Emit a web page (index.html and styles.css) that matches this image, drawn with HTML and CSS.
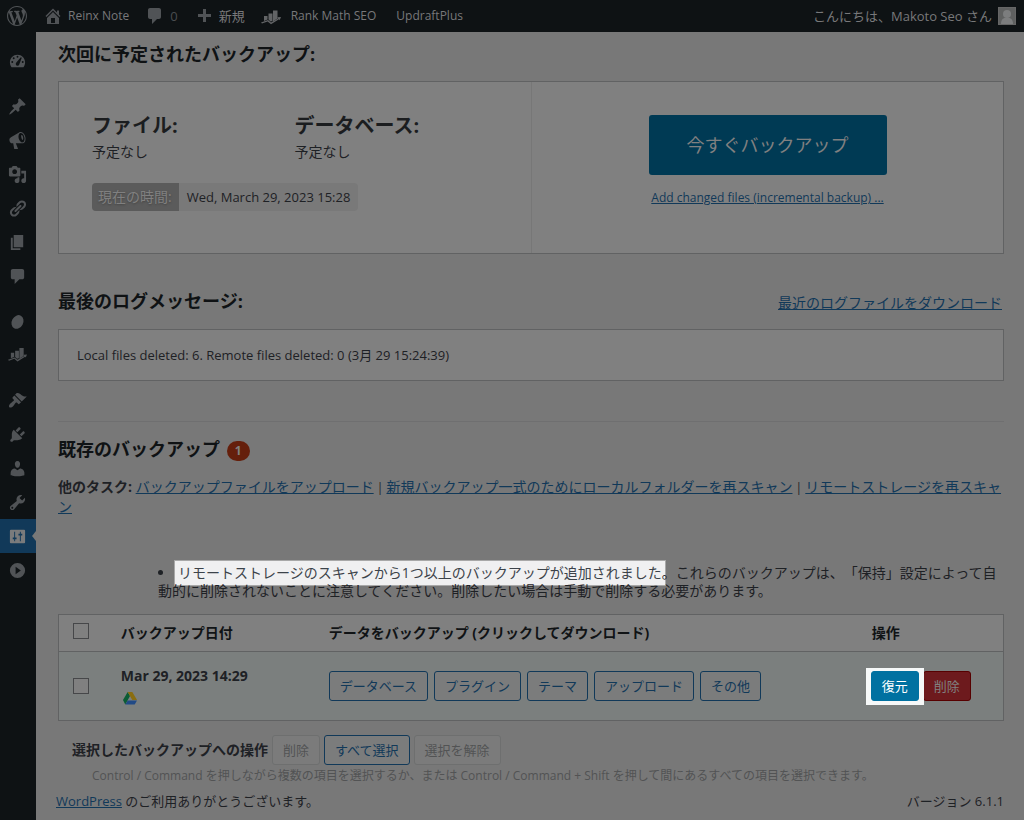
FILE: index.html
```html
<!DOCTYPE html>
<html lang="ja">
<head>
<meta charset="utf-8">
<title>UpdraftPlus</title>
<link rel="stylesheet" href="styles.css">
</head>
<body>
<header class="topbar">
  <a class="bar-item bar-logo" href="#" aria-label="WordPress"><svg class="icon" viewBox="0 0 20 20"><path d="M20 10c0-5.51-4.49-10-10-10C4.48 0 0 4.49 0 10c0 5.52 4.48 10 10 10 5.51 0 10-4.48 10-10zM7.78 15.37L4.37 6.22c.55-.02 1.17-.08 1.17-.08.5-.06.44-1.13-.06-1.11 0 0-1.45.11-2.37.11-.18 0-.37 0-.58-.01C4.12 2.69 6.87 1.11 10 1.11c2.33 0 4.45.87 6.05 2.34-.68-.11-1.65.39-1.65 1.58 0 .74.45 1.36.9 2.1.35.61.55 1.36.55 2.46 0 1.49-1.4 5-1.4 5l-3.03-8.37c.54-.02.82-.17.82-.17.5-.05.44-1.25-.06-1.22 0 0-1.44.12-2.38.12-.87 0-2.33-.12-2.33-.12-.5-.03-.56 1.2-.06 1.22l.92.08 1.26 3.41zM17.41 10c.24-.64.74-1.87.43-4.25.7 1.29 1.05 2.71 1.05 4.25 0 3.29-1.73 6.24-4.4 7.78.97-2.59 1.94-5.2 2.92-7.78zM6.1 18.09C3.12 16.65 1.11 13.53 1.11 10c0-1.3.23-2.48.72-3.59C3.25 10.3 4.67 14.2 6.1 18.09zm4.03-6.63l2.58 6.98c-.86.29-1.76.45-2.71.45-.79 0-1.57-.11-2.29-.33.81-2.38 1.62-4.74 2.42-7.1z"/></svg></a>
  <a class="bar-item bar-latin" href="#"><svg class="icon" viewBox="0 0 20 20"><path fill-rule="evenodd" d="M16 8.5l1.53 1.53-1.06 1.06L10 4.6l-6.47 6.49-1.06-1.06L10 2.5l4 4v-2h2v4zm-6-2.46l6 5.99V18H4v-5.97zM12 17v-5H8v5h4z"/></svg><span>Reinx Note</span></a>
  <a class="bar-item bar-count" href="#"><svg class="icon" viewBox="0 0 20 20"><path d="M5 2h9c1.1 0 2 .9 2 2v7c0 1.1-.9 2-2 2h-2l-5 5v-5H5c-1.1 0-2-.9-2-2V4c0-1.1.9-2 2-2z"/></svg><span>0</span></a>
  <a class="bar-item" href="#"><svg class="icon" viewBox="0 0 20 20"><path d="M17 8v3h-5v5H9v-5H4V8h5V3h3v5z"/></svg><span>新規</span></a>
  <a class="bar-item bar-latin bar-rank" href="#"><svg class="icon" viewBox="0 0 20 20"><path d="M3 10h3.500v3.500l-3.500 1.500zM7.500 7.500h4v7.500l-2 .5-2-2zM12 4.500h4.500v8l-4.500 3z"/><path d="M0 16.500l7-2.500 3 2.500 7-4-.7-1.200L20 11l-1.300 3.200-.7-1-8 5-3.400-2.700L1 17.500z"/></svg><span>Rank Math SEO</span></a>
  <a class="bar-item bar-latin" href="#"><span>UpdraftPlus</span></a>
  <a class="bar-item bar-user" href="#"><span>こんにちは、Makoto Seo さん</span><svg class="avatar" viewBox="0 0 18 18"><rect width="18" height="18" fill="#666"/><rect x="1" y="1" width="16" height="16" fill="#5f6060"/><circle cx="9" cy="7" r="4" fill="#7c7d7e"/><path fill="#7c7d7e" d="M3 17c0-4 2-6 4-6h4c2 0 4 2 4 6z"/></svg></a>
</header>
<div class="layout">
  <nav class="sidebar" aria-label="管理メニュー">
    <a class="side-item" href="#" aria-label="ダッシュボード"><svg class="icon" viewBox="0 0 20 20"><path fill-rule="evenodd" d="M3.760 16h12.480c1.100-1.370 1.760-3.110 1.760-5 0-4.420-3.580-8-8-8s-8 3.580-8 8c0 1.890.66 3.630 1.760 5zM10 4a1 1 0 1 1 0 2 1 1 0 0 1 0-2zM6 5.500a1 1 0 1 1 0 2 1 1 0 0 1 0-2zM4.500 9.500a1 1 0 1 1 0 2 1 1 0 0 1 0-2zM15.500 9.500a1 1 0 1 1 0 2 1 1 0 0 1 0-2zM13.500 5.500l1 .5-2.500 6.500c-.2 1-1 2-2 2a2 2 0 0 1-1-3.600z"/></svg></a>
    <a class="side-item group" href="#" aria-label="投稿"><svg class="icon" viewBox="0 0 20 20"><path d="M10.440 3.020l1.820-1.820 6.360 6.350-1.830 1.820c-1.050-.68-2.480-.57-3.410.36l-.75.75c-.92.93-1.040 2.350-.35 3.410l-1.830 1.820-2.410-2.410-2.800 2.790c-.42.42-3.380 2.710-3.800 2.290s1.860-3.390 2.280-3.810l2.790-2.790L4.100 9.360l1.830-1.820c1.050.69 2.480.57 3.400-.36l.75-.75c.93-.92 1.050-2.350.36-3.410z"/></svg></a>
    <a class="side-item" href="#" aria-label="お知らせ"><svg class="icon" viewBox="0 0 20 20"><path fill-rule="evenodd" d="M18.150 5.940c.46 1.620.38 3.220-.02 4.480-.42 1.280-1.260 2.180-2.300 2.480-.16.06-.26.06-.4.06-.06.02-.12.02-.18.02-.06.02-.14.02-.22.02h-6.800l2.220 5.500c.02.14-.06.26-.14.34-.08.1-.24.16-.34.16H6.950c-.1 0-.26-.06-.34-.16-.08-.08-.16-.2-.14-.34l-1-5.500H4.250l-.02-.02c-.5.06-1.080-.18-1.540-.62s-.88-1.080-1.060-1.880c-.24-.8-.2-1.560-.02-2.200.18-.62.58-1.080 1.060-1.300l.02-.02 9-5.400c.1-.06.18-.1.24-.16.06-.04.14-.08.24-.12.16-.08.28-.12.5-.18 1.040-.3 2.240.1 3.220.98s1.840 2.240 2.260 3.860zm-2.580 5.980h-.02c.4-.1.74-.34 1.040-.7.58-.7.86-1.760.86-3.040 0-.64-.1-1.300-.28-1.980-.34-1.360-1.020-2.500-1.780-3.240s-1.680-1.100-2.460-.88c-.82.22-1.400.96-1.700 2-.32 1.040-.28 2.360.06 3.720.38 1.360 1 2.500 1.800 3.240.78.74 1.620 1.100 2.480.88zM15 4.500c1 1 1.500 4 .5 5-1.200-.5-2-4-1.500-5.300z"/></svg></a>
    <a class="side-item" href="#" aria-label="メディア"><svg class="icon" viewBox="0 0 20 20"><path fill-rule="evenodd" d="M13 11V4c0-.55-.45-1-1-1h-1.670L9 1H5L3.670 3H2c-.55 0-1 .45-1 1v7c0 .55.45 1 1 1h10c.55 0 1-.45 1-1zM7 4.500c1.380 0 2.500 1.120 2.500 2.500S8.380 9.500 7 9.500 4.500 8.380 4.500 7 5.620 4.500 7 4.500zM14 6h5v10.500c0 1.380-1.120 2.500-2.500 2.500S14 17.880 14 16.500s1.120-2.500 2.500-2.500c.17 0 .34.02.5.05V9h-3V6zm-4 8.050V13h2v3.500c0 1.380-1.120 2.500-2.500 2.500S7 17.880 7 16.500 8.120 14 9.500 14c.17 0 .34.02.5.05z"/></svg></a>
    <a class="side-item" href="#" aria-label="リンク"><svg class="icon" viewBox="0 0 20 20"><path d="M17.740 2.760c1.680 1.690 1.680 4.410 0 6.100l-1.530 1.520c-1.120 1.120-2.700 1.470-4.140 1.090l2.620-2.610.76-.77.76-.76c.84-.84.84-2.200 0-3.040-.84-.85-2.200-.85-3.040 0l-.77.76-3.380 3.380c-.37-1.440-.02-3.020 1.100-4.140l1.520-1.530c1.690-1.680 4.420-1.680 6.100 0zM8.590 13.430l5.340-5.340c.42-.42.42-1.100 0-1.520-.44-.43-1.130-.39-1.530 0l-5.330 5.340c-.42.42-.42 1.100 0 1.520.44.43 1.130.39 1.520 0zm-.76 2.290l4.140-4.150c.38 1.440.03 3.020-1.090 4.140l-1.520 1.530c-1.690 1.680-4.410 1.680-6.100 0-1.680-1.680-1.680-4.420 0-6.100l1.530-1.520c1.120-1.120 2.700-1.470 4.140-1.100l-4.140 4.150c-.85.84-.85 2.200 0 3.050.84.84 2.200.84 3.040 0z"/></svg></a>
    <a class="side-item" href="#" aria-label="固定ページ"><svg class="icon" viewBox="0 0 20 20"><path d="M6 15V2h10v13H6zm-1 1h8v2H3V5h2v11z"/></svg></a>
    <a class="side-item" href="#" aria-label="コメント"><svg class="icon" viewBox="0 0 20 20"><path d="M5 2h10c1.100 0 2 .9 2 2v7c0 1.100-.9 2-2 2h-3l-5 5v-5H5c-1.100 0-2-.9-2-2V4c0-1.100.9-2 2-2z"/></svg></a>
    <a class="side-item group" href="#" aria-label="プラグイン設定"><svg class="icon" viewBox="0 0 20 20"><ellipse cx="10" cy="10.500" rx="6" ry="7.500" transform="rotate(28 10 10.500)"/></svg></a>
    <a class="side-item" href="#" aria-label="Rank Math"><svg class="icon" viewBox="0 0 20 20"><path d="M3 7h3.500v4.500l-3.500 1.500zM7.500 5h4v8l-2 .5-2-2zM12 2h4.500v8.500l-4.500 3z"/><path d="M0 14.500l7-2.500 3 2.500 7-4-.7-1.200L20 9l-1.300 3.200-.7-1-8 5-3.400-2.700L1 15.500z"/></svg></a>
    <a class="side-item group" href="#" aria-label="外観"><svg class="icon" viewBox="0 0 20 20"><path d="M14.480 11.060L7.410 3.990l1.500-1.500c.5-.56 2.300-.47 3.510.32 1.210.8 1.430 1.280 2.910 2.100 1.180.64 2.450 1.260 4.450.85zm-.71.71L6.700 4.700 4.930 6.470c-.39.39-.39 1.020 0 1.410l1.060 1.060c.39.39.39 1.030 0 1.420-.6.6-1.430 1.110-2.210 1.690-.35.26-.7.53-1.010.84C1.430 14.230.4 16.080 1.400 17.070c.99 1 2.840-.03 4.180-1.360.31-.31.58-.66.85-1.020.57-.78 1.080-1.610 1.690-2.210.39-.39 1.020-.39 1.410 0l1.060 1.060c.39.39 1.020.39 1.410 0z"/></svg></a>
    <a class="side-item" href="#" aria-label="プラグイン"><svg class="icon" viewBox="0 0 20 20"><path d="M13.110 4.360L9.870 7.600 8 5.730l3.240-3.240c.35-.34 1.050-.2 1.560.32.52.51.66 1.210.31 1.550zm-8 1.770l.91-1.120 9.010 9.010-1.190.84c-.71.71-2.630 1.160-3.820 1.160H6.140L4.900 17.260c-.59.59-1.540.59-2.120 0-.59-.58-.59-1.530 0-2.120l1.240-1.240v-3.880c0-1.130.4-3.190 1.090-3.890zm7.260 3.970l3.240-3.240c.34-.35 1.040-.21 1.550.31.52.51.66 1.210.31 1.550l-3.240 3.250z"/></svg></a>
    <a class="side-item" href="#" aria-label="ユーザー"><svg class="icon" viewBox="0 0 20 20"><path d="M10 9.250c-2.270 0-2.730-3.440-2.730-3.440C7 4.020 7.820 2 9.970 2c2.160 0 2.980 2.020 2.710 3.810 0 0-.41 3.440-2.680 3.440zm0 2.570L12.720 10c2.390 0 4.520 2.330 4.520 4.530v2.490s-3.650 1.130-7.240 1.130c-3.650 0-7.240-1.130-7.240-1.130v-2.490c0-2.250 1.940-4.480 4.470-4.480z"/></svg></a>
    <a class="side-item" href="#" aria-label="ツール"><svg class="icon" viewBox="0 0 20 20"><path fill-rule="evenodd" d="M16.680 9.770c-1.340 1.340-3.300 1.670-4.950.99l-5.410 6.520c-.99.99-2.590.99-3.580 0s-.99-2.590 0-3.570l6.520-5.420c-.68-1.650-.35-3.610.99-4.950 1.280-1.280 3.120-1.620 4.720-1.060l-2.890 2.890 2.820 2.820 2.860-2.870c.53 1.580.18 3.390-1.080 4.650zM3.810 16.210c.4.39 1.040.39 1.430 0 .4-.4.4-1.040 0-1.430-.39-.4-1.030-.4-1.430 0-.39.39-.39 1.030 0 1.430z"/></svg></a>
    <a class="side-item current" href="#" aria-label="設定"><svg class="icon" viewBox="0 0 20 20"><path fill-rule="evenodd" d="M3 3h14q1 0 1 1v12q0 1-1 1H3q-1 0-1-1V4q0-1 1-1zM6.500 5h1v6H9v2H7.500v2h-1v-2H5v-2h1.500zM12.500 5h1v2H15v2h-1.500v6h-1V9H11V7h1.500z"/></svg></a>
    <a class="side-item" href="#" aria-label="メニューを閉じる"><svg class="icon" viewBox="0 0 20 20"><path fill-rule="evenodd" d="M10 2a8 8 0 1 1 0 16 8 8 0 0 1 0-16zM8 6v8l5.500-4z"/></svg></a>
  </nav>
  <main class="content">
    <h2 class="heading">次回に予定されたバックアップ:</h2>
    <section class="card schedule">
      <div class="schedule-info">
        <div class="schedule-cols">
          <div><h3 class="subheading">ファイル:</h3><p class="none">予定なし</p></div>
          <div><h3 class="subheading">データベース:</h3><p class="none">予定なし</p></div>
        </div>
        <div class="clock"><span class="clock-label">現在の時間:</span><span class="clock-value">Wed, March 29, 2023 15:28</span></div>
      </div>
      <div class="schedule-action">
        <button class="backup-now" type="button">今すぐバックアップ</button>
        <a class="small-link" href="#">Add changed files (incremental backup) ...</a>
      </div>
    </section>
    <div class="log-head">
      <h2 class="heading">最後のログメッセージ:</h2>
      <a href="#">最近のログファイルをダウンロード</a>
    </div>
    <section class="card log">Local files deleted: 6. Remote files deleted: 0 (3月 29 15:24:39)</section>
    <section class="existing">
      <h2 class="heading">既存のバックアップ <span class="badge">1</span></h2>
      <p class="tasks"><strong>他のタスク:</strong> <a href="#">バックアップファイルをアップロード</a><span class="sep"> | </span><a href="#">新規バックアップ一式のためにローカルフォルダーを再スキャン</a><span class="sep"> | </span><a href="#">リモートストレージを再スキャン</a></p>
      <ul class="messages"><li><span class="spot">リモートストレージのスキャンから1つ以上のバックアップが追加されました</span>。これらのバックアップは、「保持」設定によって自動的に削除されないことに注意してください。削除したい場合は手動で削除する必要があります。</li></ul>
      <table class="backups">
        <colgroup><col class="col-check"><col class="col-date"><col class="col-data"><col class="col-ops"></colgroup>
        <thead><tr><th><input class="check" type="checkbox" aria-label="すべて選択"></th><th>バックアップ日付</th><th>データをバックアップ (クリックしてダウンロード)</th><th>操作</th></tr></thead>
        <tbody><tr>
          <td><input class="check" type="checkbox" aria-label="Mar 29, 2023 14:29 を選択"></td>
          <td><div class="date">Mar 29, 2023 14:29</div><svg class="drive" viewBox="0 0 14 13" role="img" aria-label="Google Drive"><path fill="#0a5c34" d="M4.700 0L0 8l2.300 4.500L7 4z"/><path fill="#8a6d10" d="M4.700 0h4.600L14 8H9.300z"/><path fill="#214a86" d="M4.700 8.500H14L11.700 12.500H2.300z"/></svg></td>
          <td><div class="button-row"><button class="button" type="button">データベース</button><button class="button" type="button">プラグイン</button><button class="button" type="button">テーマ</button><button class="button" type="button">アップロード</button><button class="button" type="button">その他</button></div></td>
          <td><div class="ops"><span class="frame"><button class="button restore" type="button">復元</button></span><button class="button delete" type="button">削除</button></div></td>
        </tr></tbody>
      </table>
      <div class="bulk"><strong>選択したバックアップへの操作</strong><button class="button" type="button" disabled>削除</button><button class="button" type="button">すべて選択</button><button class="button" type="button" disabled>選択を解除</button></div>
      <p class="hint">Control / Command を押しながら複数の項目を選択するか、または Control / Command + Shift を押して間にあるすべての項目を選択できます。</p>
    </section>
    <footer class="footer"><span><a href="#">WordPress</a> のご利用ありがとうございます。</span><span>バージョン 6.1.1</span></footer>
  </main>
</div>
</body>
</html>
```

FILE: styles.css
```css
* { box-sizing: border-box; }
body {
  margin: 0;
  min-height: 100vh;
  display: flex;
  flex-direction: column;
  background: #787878;
  color: #1e2125;
  font: 14px/18px "Open Sans", "Noto Sans CJK JP", sans-serif;
}
h2, h3, p, ul { margin: 0; padding: 0; }
a { color: #113959; }
button { font: inherit; }

.topbar {
  display: flex;
  height: 32px;
  padding: 0 8px 0 7px;
  gap: 16px;
  background: #0e1214;
  font-size: 13px;
}
.bar-item { display: flex; align-items: center; gap: 5px; color: #78787a; text-decoration: none; white-space: nowrap; }
.bar-item .icon { color: #505356; }
.bar-latin { font-size: 12px; }
.bar-count span { color: #4a4d50; }
.bar-rank { gap: 10px; padding-right: 4px; }
.bar-item.bar-rank .icon { color: #626466; }
.bar-user { margin-left: auto; gap: 6px; }
.avatar { width: 18px; height: 18px; }
.icon { width: 20px; height: 20px; flex: none; fill: currentColor; }

.layout { display: flex; flex: 1; }
.sidebar { flex: none; width: 36px; padding-top: 12px; background: #0e1214; }
.side-item { display: flex; align-items: center; justify-content: center; height: 34px; padding-right: 1px; color: #505356; }
.side-item .icon { width: 19px; height: 19px; }
.side-item.group { margin-top: 11px; }
.side-item.current { position: relative; background: #113959; color: #7a7b7c; }
.side-item.current::after {
  content: "";
  position: absolute;
  right: 0;
  top: 12px;
  border: 5px solid transparent;
  border-left: 0;
  border-right: 4px solid #787878;
}

.content { flex: 1; min-width: 0; padding: 10px 20px 0 22px; }
.heading { font-size: 18px; line-height: 24px; font-weight: 700; color: #0f1214; }
.card { background: #808080; border: 1px solid #616263; }
.schedule { display: grid; grid-template-columns: 1fr 1fr; margin-top: 15px; }
.schedule-info { padding: 32px 34px 42px 33px; }
.schedule-cols { display: grid; grid-template-columns: 1fr 1fr; }
.subheading { font-size: 20px; line-height: 24px; font-weight: 700; color: #1b1d1f; }
.none { margin-top: 5px; }
.clock { display: inline-flex; margin-top: 22px; line-height: 28px; border-radius: 4px; overflow: hidden; background: #797979; }
.clock-label { padding: 0 7px 0 6px; background: #5b5b5b; color: #808080; text-shadow: 0 1px 2px #444; }
.clock-value { padding: 0 8px; font-size: 13px; }
.schedule-action {
  display: flex;
  flex-direction: column;
  align-items: center;
  padding-top: 33px;
  border-left: 1px solid #777777;
}
.backup-now {
  height: 60px;
  padding: 0 38px;
  border: 0;
  border-radius: 3px;
  background: #003a54;
  color: #808080;
  font-size: 18px;
}
.small-link { margin-top: 14px; font-size: 12px; }

.log-head { display: flex; justify-content: space-between; align-items: baseline; margin-top: 35px; padding-right: 2px; }
.log { margin-top: 16px; padding: 16px 18px; font-size: 13px; }

.existing { margin-top: 40px; padding-top: 15px; border-top: 1px solid #6f6f70; }
.badge {
  display: inline-block;
  min-width: 23px;
  margin-left: 2px;
  padding: 0 8px;
  border-radius: 10px;
  background: #651f0b;
  color: #808080;
  font-size: 12px;
  line-height: 20px;
  text-align: center;
  vertical-align: 1px;
}
.tasks { margin-top: 16px; line-height: 19px; }
.sep { font-size: 12px; }
.messages { margin: 48px 0 14px 100px; list-style-position: inside; text-spacing-trim: space-all; }
.spot { margin: 0 -3px; padding: 2px 3px 3px; background: #f0f0f1; color: #3c434a; box-shadow: 0 0 0 1px #a8a8a8; }

.backups { width: 100%; table-layout: fixed; border-collapse: collapse; border: 1px solid #616263; }
.col-check { width: 5%; }
.col-date { width: 22%; }
.col-ops { width: 15%; }
.backups thead { background: #808080; }
.backups th { height: 37px; padding: 0 10px; text-align: left; color: #101315; }
.backups thead tr { border-bottom: 1px solid #616263; }
.backups tbody { background: #7b7f7e; }
.backups td { height: 69px; padding: 0 10px; vertical-align: middle; }
.backups th:first-child { padding: 0 14px 4px; }
.backups td:first-child { padding: 0 14px; }
.backups th:nth-child(2), .backups td:nth-child(2) { padding-left: 15px; }
.backups th:nth-child(3), .backups td:nth-child(3) { padding-left: 15px; }
.check {
  appearance: none;
  display: block;
  width: 16px;
  height: 16px;
  margin: 0;
  border: 1px solid #464749;
  background: #808080;
}
.date { font-weight: 700; color: #1e2125; }
.drive { display: block; width: 14px; height: 13px; margin: 7px 0 0 2px; }
.button-row { display: flex; gap: 6px; }
.button {
  height: 30px;
  padding: 0 10px;
  border: 1px solid #113959;
  border-radius: 3px;
  background: #7b7c7c;
  color: #113959;
  font-size: 13px;
  white-space: nowrap;
}
.button:disabled { border-color: #6e6f6f; background: #7b7b7b; color: #525354; }
.ops { display: flex; align-items: center; }
.frame { position: relative; flex: none; margin: 0 -1px 0 -6px; padding: 3px 5px 4px; background: #f6f8f8; }
.frame .button { display: block; }
.button.restore { background: #0071a1; border-color: #0071a1; color: #ffffff; }
.button.delete { background: #6d1a1d; border-color: #570000; color: #808080; }

.bulk { display: flex; align-items: center; gap: 4px; margin: 14px 0 0 14px; }
.hint { margin: 2px 0 0 34px; font-size: 12px; color: #525354; }
.footer { display: flex; justify-content: space-between; margin: 7px 0 10px -2px; font-size: 13px; }
```
